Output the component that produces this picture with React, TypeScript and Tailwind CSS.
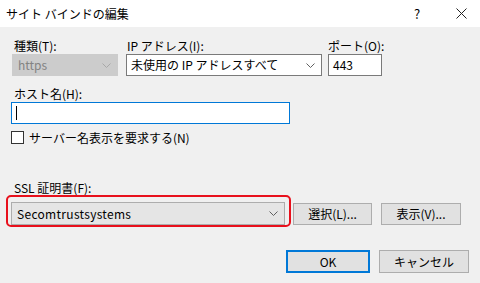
import React from "react";

function Chevron({ color = "#606060" }: { color?: string }) {
  return (
    <svg width="9" height="5" viewBox="0 0 9 5" className="shrink-0">
      <path d="M0.5 0.5 L4.5 4.5 L8.5 0.5" fill="none" stroke={color} strokeWidth="1" />
    </svg>
  );
}

function Button({ label, w, primary }: { label: string; w: string; primary?: boolean }) {
  return (
    <div
      className={`${w} flex items-center justify-center bg-[#e1e1e1] ${
        primary ? "border-2 border-[#0078d7] h-[23px]" : "border border-[#adadad] h-[22px]"
      }`}
    >
      {label}
    </div>
  );
}

export default function App() {
  return (
    <div className="relative w-[480px] h-[283px] overflow-hidden whitespace-nowrap bg-[#f0f0f0] text-[12px] leading-[16px] text-black font-['Noto_Sans_CJK_JP','Noto_Sans',sans-serif]">
      {/* title bar */}
      <div className="h-[27px] bg-white flex items-center pl-[6px]">
        <span className="flex-1">サイト バインドの編集</span>
        <span className="w-[10px] text-[13px] mr-[32px]">?</span>
        <svg width="11" height="11" viewBox="0 0 11 11" className="mr-[13px]">
          <path d="M0.5 0.5 L10.5 10.5 M10.5 0.5 L0.5 10.5" stroke="#222" strokeWidth="1" />
        </svg>
      </div>

      {/* type / ip / port */}
      <div className="flex gap-[8px] pl-[12px] mt-[11px]">
        <div className="w-[106px] flex flex-col">
          <span className="pl-[2px] h-[16px]">種類(T):</span>
          <div className="h-[22px] bg-[#cccccc] border border-[#cccccc] flex items-center pl-[5px] pr-[6px] text-[#838383]">
            <span className="flex-1">https</span>
            <Chevron color="#a8a8a8" />
          </div>
        </div>
        <div className="w-[196px] flex flex-col">
          <span className="pl-[1px] h-[16px]">IP アドレス(I):</span>
          <div className="h-[22px] bg-white border border-[#7a7a7a] flex items-center pl-[4px] pr-[6px]">
            <span className="flex-1">未使用の IP アドレスすべて</span>
            <Chevron />
          </div>
        </div>
        <div className="w-[54px] flex flex-col ml-[-2px]">
          <span className="h-[16px]">ポート(O):</span>
          <div className="h-[22px] bg-white border border-[#7a7a7a] flex items-center pl-[4px]">443</div>
        </div>
      </div>

      {/* host name */}
      <div className="flex flex-col pl-[11px] mt-[10px]">
        <span className="pl-[3px] h-[16px]">ホスト名(H):</span>
        <div className="w-[279px] h-[22px] bg-white border border-[#0078d7] flex items-center pl-[4px]">
          <div className="w-[1px] h-[14px] bg-black" />
        </div>
      </div>

      {/* SNI checkbox */}
      <div className="flex items-center pl-[11px] mt-[7px] h-[13px]">
        <div className="w-[13px] h-[13px] border border-[#333333] bg-white" />
        <span className="ml-[5px]">サーバー名表示を要求する(N)</span>
      </div>

      {/* ssl */}
      <div className="flex flex-col mt-[36px]">
        <span className="pl-[14px] h-[16px]">SSL 証明書(F):</span>
        <div className="flex items-center pl-[11px] mt-[6px]">
          <div className="w-[274px] h-[23px] bg-[#e5e5e5] border border-[#adadad] flex items-center pl-[5px] pr-[6px]">
            <span className="flex-1 tracking-[0.3px]">Secomtrustsystems</span>
            <Chevron />
          </div>
          <div className="ml-[8px]">
            <Button label="選択(L)..." w="w-[79px]" />
          </div>
          <div className="ml-[9px]">
            <Button label="表示(V)..." w="w-[80px]" />
          </div>
        </div>
      </div>

      {/* ok / cancel */}
      <div className="flex justify-end gap-[9px] pr-[11px] mt-[25px]">
        <Button label="OK" w="w-[84px]" primary />
        <div className="h-[23px] w-[90px] flex items-center justify-center bg-[#e1e1e1] border border-[#adadad]">
          キャンセル
        </div>
      </div>

      {/* red highlight annotation */}
      <div className="absolute left-[6px] top-[195px] w-[285px] h-[32px] border-2 border-[#e8101c] rounded-[5px]" />
    </div>
  );
}
